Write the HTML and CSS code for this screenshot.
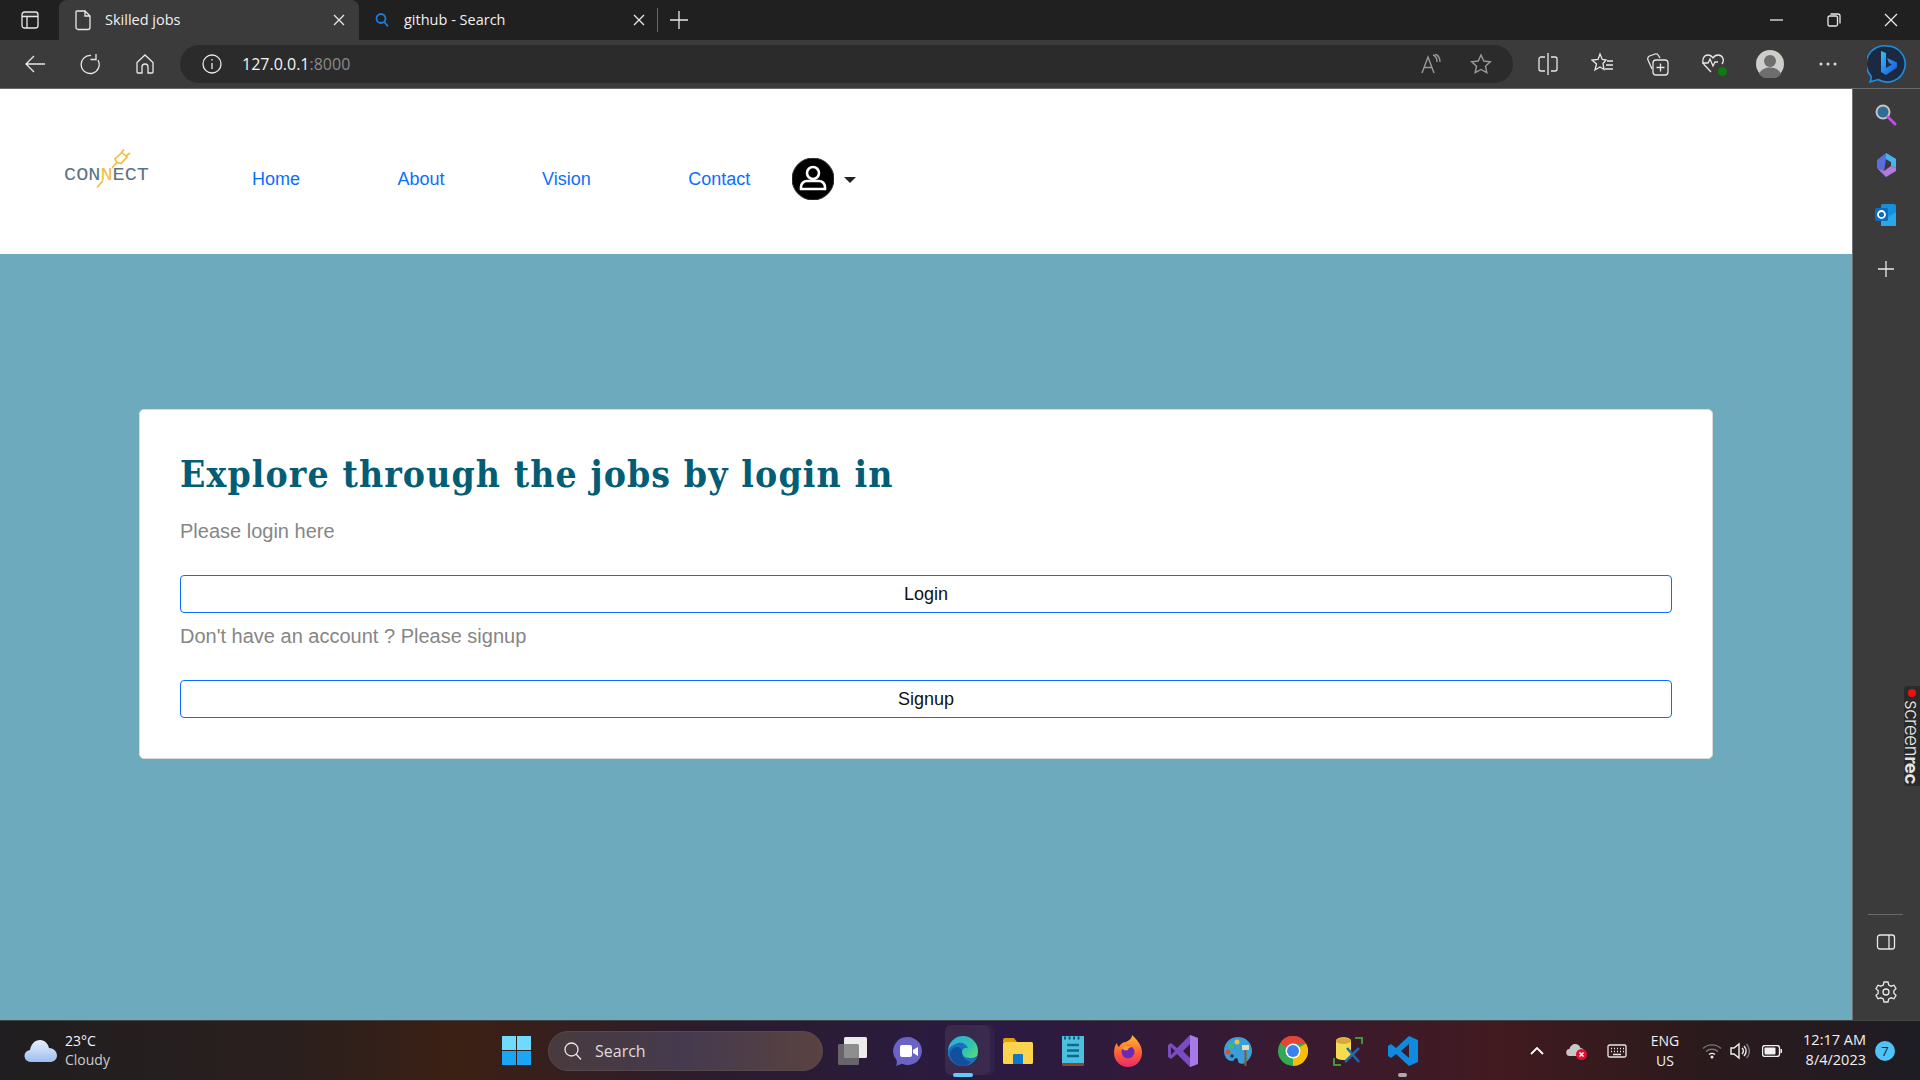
FILE: index.html
```html
<!doctype html>
<html lang="en">
<head>
	<meta charset="UTF-8">
	<title>Skilled jobs</title>
	<link rel="stylesheet" href="styles.css">
</head>
<body>
	<!-- tabs row -->
	<div class="titlebar">
		<div class="tab_actions">
			<svg width="20" height="20" viewBox="0 0 20 20" class="line"><rect x="2" y="2" width="16" height="16" rx="2.5"/><path d="M2 6.5h16M7 6.5V18" /><rect x="2" y="2" width="16" height="4.5" class="solid"/></svg>
		</div>
		<div class="tab tab_on">
			<svg width="18" height="22" viewBox="0 0 18 22" class="line"><path d="M3 2h8l5 5v11.5a2 2 0 0 1-2 2H4a2 2 0 0 1-2-2V3a1 1 0 0 1 1-1zM11 2v5h5"/></svg>
			<span class="tab_text">Skilled jobs</span>
			<svg class="tab_close line" width="12" height="12" viewBox="0 0 12 12"><path d="M1 1l10 10M11 1L1 11"/></svg>
		</div>
		<div class="tab tab_second">
			<svg width="18" height="18" viewBox="0 0 18 18" class="line_blue"><circle cx="8" cy="7.5" r="4.5"/><path d="M11.3 11l3.700 4.500"/></svg>
			<span class="tab_text">github - Search</span>
			<svg class="tab_close line" width="12" height="12" viewBox="0 0 12 12"><path d="M1 1l10 10M11 1L1 11"/></svg>
		</div>
		<div class="tab_sep"></div>
		<div class="tab_new">
			<svg width="18" height="18" viewBox="0 0 18 18" class="line"><path d="M9 0v18M0 9h18"/></svg>
		</div>
		<div class="win_ctrls">
			<div class="win_btn"><svg width="14" height="14" viewBox="0 0 14 14" class="line"><path d="M0 7h13"/></svg></div>
			<div class="win_btn"><svg width="14" height="14" viewBox="0 0 14 14" class="line"><rect x="1" y="3" width="9.5" height="10" rx="1.5"/><path d="M3.5 1h7.500a2 2 0 0 1 2 2v7.500"/></svg></div>
			<div class="win_btn"><svg width="14" height="14" viewBox="0 0 14 14" class="line"><path d="M1 1l12 12M13 1L1 13"/></svg></div>
		</div>
	</div>

	<!-- address row -->
	<div class="toolbar">
		<div class="tool_btn"><svg width="22" height="22" viewBox="0 0 22 22" class="line"><path d="M21 11H2M10 3l-8 8 8 8"/></svg></div>
		<div class="tool_btn"><svg width="22" height="22" viewBox="0 0 22 22" class="line"><path d="M19 7a9 9 0 1 1-7-4.500M17 1v5.500h-5.500"/></svg></div>
		<div class="tool_btn"><svg width="22" height="22" viewBox="0 0 22 22" class="line"><path d="M3 9.500L11 2l8 7.500V19a1 1 0 0 1-1 1h-4v-6a3 3 0 0 0-6 0v6H4a1 1 0 0 1-1-1z"/></svg></div>
		<div class="address">
			<svg width="20" height="20" viewBox="0 0 20 20" class="line"><circle cx="10" cy="10" r="9"/><path d="M10 9v6M10 5v1.500"/></svg>
			<span class="url">127.0.0.1<span class="url_port">:8000</span></span>
			<div class="address_right">
				<svg width="20" height="20" viewBox="0 0 20 20" class="line_dim"><path d="M1 19L7 3l6 16M3 13.500h8M12 1c3 1 4 4 4 7M14 0c4 1.500 5 5 5 8"/></svg>
				<svg width="22" height="22" viewBox="0 0 22 22" class="line_dim"><path d="M11 2l2.800 6 6.500.8-4.800 4.400 1.300 6.500L11 16.500l-5.800 3.200 1.300-6.500-4.800-4.400L8.200 8z"/></svg>
			</div>
		</div>
		<div class="tool_group">
			<div class="tool_btn"><svg width="22" height="24" viewBox="0 0 22 24" class="line"><path d="M11 1v22M8 5H4a2 2 0 0 0-2 2v10a2 2 0 0 0 2 2h4M14 5h4a2 2 0 0 1 2 2v10a2 2 0 0 1-2 2h-4"/></svg></div>
			<div class="tool_btn"><svg width="24" height="24" viewBox="0 0 24 24" class="line"><path d="M9 2l2.300 5.500 3.700.5-3 3.500 1 6-4-2.500-5 3 1.500-6L1 8l6-.5zM16 9h6M15 13h7M14 17h8"/></svg></div>
			<div class="tool_btn"><svg width="24" height="24" viewBox="0 0 24 24" class="line"><path d="M6 17L2 8a3 3 0 0 1 1.500-4L9 2a3 3 0 0 1 3.500 1.500L14 6"/><rect x="7" y="8" width="15" height="15" rx="3"/><path d="M14.500 11.500v8M10.500 15.500h8"/></svg></div>
			<div class="tool_btn tool_health">
				<svg width="24" height="24" viewBox="0 0 24 24" class="line"><path d="M10 20L3.500 13C0 9 2.500 3 7 3c2.500 0 4 1.500 5 3 1-1.500 2.500-3 5-3 4.500 0 7 5 4 9M1 11h6l2-4 3 7 2-4h3"/></svg>
				<span class="health_dot"></span>
			</div>
			<div class="tool_btn tool_avatar">
				<svg width="28" height="28" viewBox="0 0 28 28"><circle cx="14" cy="14" r="14" class="av_bg"/><circle cx="14" cy="11" r="6" class="av_fg"/><path d="M3 24c2-5 7-6.500 11-6.500S23 19 25 24a14 14 0 0 1-22 0z" class="av_fg"/></svg>
			</div>
			<div class="tool_btn tool_more"><svg width="18" height="4" viewBox="0 0 18 4" class="dots"><circle cx="2" cy="2" r="1.500"/><circle cx="9" cy="2" r="1.500"/><circle cx="16" cy="2" r="1.500"/></svg></div>
		</div>
		<div class="bing">
			<svg width="40" height="40" viewBox="0 0 40 40">
				<defs><linearGradient id="bingb" x1="0" y1="0" x2="1" y2="1"><stop offset="0" stop-color="#37bdff"/><stop offset="1" stop-color="#1a55d8"/></linearGradient></defs>
				<path d="M20 2a18 18 0 1 1-9 33.500L3 38c1-2 1.500-4 1-6A18 18 0 0 1 20 2z" class="bing_ring"/>
				<path d="M14 7l5 2v15l6-3.500-3-1.500-2-5 10 4.500v5L19 31l-5-3z" fill="url(#bingb)"/>
			</svg>
		</div>
	</div>

	<div class="viewport">
		<div class="page">
			<div class="site_nav">
				<svg class="logo" width="90" height="50" viewBox="0 0 90 50">
					<path d="M35 38.500l6-7M50 19l5-5.500" class="logo_plug"/>
					<path d="M55 13.500l-2-3.500 7-6.500 5 4.500-6 6.500zM59 4l3-3.500M64 7l4-3" class="logo_plug"/>
					<text x="2" y="30.500" class="logo_text" textLength="85" lengthAdjust="spacingAndGlyphs">CON<tspan class="logo_n">N</tspan>ECT</text>
				</svg>
				<a href="#" class="nav_link">Home</a>
				<a href="#" class="nav_link">About</a>
				<a href="#" class="nav_link">Vision</a>
				<a href="#" class="nav_link">Contact</a>
				<div class="user_menu">
					<svg width="42" height="42" viewBox="0 0 42 42">
						<circle cx="21" cy="21" r="21" class="user_bg"/>
						<circle cx="21" cy="15" r="6" class="user_line"/>
						<path d="M9 31v-2a6 6 0 0 1 6-6h12a6 6 0 0 1 6 6v2z" class="user_line"/>
					</svg>
					<span class="caret"></span>
				</div>
			</div>
			<div class="content">
				<div class="card">
					<h1 class="card_title">Explore through the jobs by login in</h1>
					<p class="card_text">Please login here</p>
					<button class="card_btn">Login</button>
					<p class="card_text">Don't have an account ? Please signup</p>
					<button class="card_btn">Signup</button>
				</div>
			</div>
		</div>

		<div class="sidebar">
			<div class="side_btn"><svg width="24" height="24" viewBox="1 1 24 24"><circle cx="10" cy="10" r="6.500" class="sb_glass"/><path d="M15 15l7 7" class="sb_handle"/></svg></div>
			<div class="side_btn">
				<svg width="24" height="26" viewBox="0 0 24 26">
					<path d="M12 1l10 6-5 3-5-3-2 12-7-3V8z" class="cop_left"/>
					<path d="M12 1l10 6v9l-5-2v-4l-5-3z" class="cop_top"/>
					<path d="M3 16l7 3 7-5 5 2v3l-10 6z" class="cop_bottom"/>
				</svg>
			</div>
			<div class="side_btn">
				<svg width="24" height="24" viewBox="0 0 24 24"><rect x="7" y="1" width="15" height="22" rx="2" class="ol_back"/><path d="M22 9l-9 6-6-4v12h15z" class="ol_front"/><rect x="1" y="5" width="13" height="13" rx="1.500" class="ol_tile"/><circle cx="7.500" cy="11.500" r="3.500" class="ol_o"/></svg>
			</div>
			<div class="side_btn side_plus"><svg width="16" height="16" viewBox="0 0 16 16" class="line"><path d="M8 0v16M0 8h16"/></svg></div>
			<div class="side_bottom">
				<div class="side_rule"></div>
				<div class="side_btn"><svg width="20" height="16" viewBox="0 0 20 16" class="line"><rect x="1.500" y="1" width="17" height="14" rx="2.500"/><path d="M13 1v14"/></svg></div>
				<div class="side_btn"><svg width="22" height="22" viewBox="0 0 22 22" class="line"><circle cx="11" cy="11" r="3"/><path d="M9 1h4l.7 3 2.500 1.200 2.800-1 2 3.400-2.200 2.100v2.600l2.200 2.100-2 3.400-2.800-1L13.700 18 13 21H9l-.7-3-2.500-1.200-2.800 1-2-3.400 2.200-2.100V9.700L1 7.600l2-3.400 2.800 1L8.300 4z"/></svg></div>
			</div>
			<div class="screenrec"><span class="rec_dot"></span><span class="rec_text">screen<b>rec</b></span></div>
		</div>
	</div>

	<!-- windows taskbar -->
	<div class="taskbar">
		<div class="weather">
			<svg width="34" height="24" viewBox="0 0 34 24">
				<defs><linearGradient id="cloud" x1="0" y1="0" x2="0" y2="1"><stop offset="0" stop-color="#e6f0ff"/><stop offset="1" stop-color="#9dbdf0"/></linearGradient></defs>
				<path d="M7 23a6 6 0 0 1-1-12c1-6 5-10 10-10s8 4 9 8c4 0 8 3 8 7.500S29 23 26 23z" fill="url(#cloud)"/>
			</svg>
			<div class="weather_text"><span class="weather_temp">23°C</span><span>Cloudy</span></div>
		</div>
		<div class="task">
			<svg width="29" height="29" viewBox="0 0 29 29"><rect width="14" height="14" class="win_a"/><rect x="15" width="14" height="14" class="win_a"/><rect y="15" width="14" height="14" class="win_b"/><rect x="15" y="15" width="14" height="14" class="win_b"/></svg>
		</div>
		<div class="task_search">
			<svg width="20" height="20" viewBox="0 0 20 20" class="line"><circle cx="8.500" cy="8.500" r="6.500"/><path d="M13 13l5 5.500"/></svg>
			<span>Search</span>
		</div>
		<div class="task">
			<svg width="30" height="28" viewBox="0 0 30 28"><rect x="6" y="0" width="23" height="21" rx="1.500" class="tv_front"/><rect x="0" y="7" width="21" height="21" rx="1.500" class="tv_back"/></svg>
		</div>
		<div class="task">
			<svg width="30" height="30" viewBox="0 0 30 30"><path d="M15 1a14 14 0 1 1-6 26.700L3 30c1-2 1-4 .5-6A14 14 0 0 1 15 1z" class="meet_bg"/><rect x="7" y="9" width="12" height="12" rx="2" class="meet_fg"/><path d="M20 14l5-3v9l-5-3z" class="meet_fg"/></svg>
		</div>
		<div class="task task_on">
			<svg width="32" height="32" viewBox="0 0 32 32">
				<defs><linearGradient id="edge" x1="0" y1="0" x2="1" y2="1"><stop offset="0" stop-color="#2fa8e8"/><stop offset=".55" stop-color="#2fc6a8"/><stop offset="1" stop-color="#7fe060"/></linearGradient></defs>
				<circle cx="16" cy="16" r="15" fill="url(#edge)"/>
				<path d="M31 18c0 3-3 5-8 5-6 0-8-3-8-6s3-5 6-4c-2-5-7-6-10-5C5 10 1 13 1 17c0 8 7 14 15 14 7 0 14-5 15-13z" class="edge_b"/>
				<path d="M15 17c0 4 3 9 9 10-3 3-5 4-8 4-8 0-13-7-13-12 0-4 4-7 7-7 3 0 5 2 5 5z" class="edge_c"/>
			</svg>
			<span class="task_bar"></span>
		</div>
		<div class="task">
			<svg width="30" height="26" viewBox="0 0 30 26"><path d="M0 2a2 2 0 0 1 2-2h9l3 4h-14z" class="dir_tab"/><rect y="4" width="30" height="22" rx="1.500" class="dir_body"/><path d="M10 17a1 1 0 0 1 1-1h8a1 1 0 0 1 1 1v9H10z" class="dir_slot"/></svg>
		</div>
		<div class="task">
			<svg width="22" height="30" viewBox="0 0 22 30"><rect width="22" height="30" rx="1" class="note_foot"/><rect width="22" height="27" class="note_body"/><path d="M2 2h2M6.500 2h2M11 2h2M15.500 2h2" class="note_rings"/><path d="M5 9h12M5 14.500h12M5 20h12" class="note_lines"/></svg>
		</div>
		<div class="task">
			<svg width="30" height="32" viewBox="0 0 30 32">
				<defs><linearGradient id="fox" x1="0" y1="0" x2="0" y2="1"><stop offset="0" stop-color="#ffbd2e"/><stop offset=".6" stop-color="#ff5a36"/><stop offset="1" stop-color="#e8286e"/></linearGradient></defs>
				<path d="M19 0c4 4 10 9 10 18a14 14 0 0 1-28 0c0-4 1-8 3-10 0 2 1 3 2 4 1-3 4-5 7-5 3-2 6-3 6-7z" fill="url(#fox)"/>
				<circle cx="15" cy="17" r="6.500" class="fox_eye"/>
				<path d="M9 13c3-3 8-3 11-1-3 0-5 1-5 3-3 1-5 0-6-2z" class="fox_head"/>
			</svg>
		</div>
		<div class="task">
			<svg width="30" height="32" viewBox="0 0 30 32"><path d="M22 0l8 3v26l-8 3-13-13-6 5-3-2V10l3-2 6 5zM3 12v8l4-4zM22 9l-7 7 7 7z" class="vs_logo" fill-rule="evenodd"/><path d="M22 0l8 3v26l-8 3z" class="vs_side"/></svg>
		</div>
		<div class="task">
			<svg width="30" height="30" viewBox="0 0 30 30"><path d="M15 1C7 1 1 7 1 15c0 5 3 10 8 10 3 0 2-3 4-3 1 0 2 1 2 3s3 4 7 2c4-3 7-7 7-12C29 7 23 1 15 1z" class="pal_body"/><circle cx="8" cy="10" r="2.500" class="pal_g"/><circle cx="14" cy="6" r="2.500" class="pal_y"/><circle cx="5" cy="16" r="2.500" class="pal_r"/><circle cx="9" cy="20" r="1.800" class="pal_d"/><rect x="19" y="9" width="7" height="5" class="pal_brush"/><rect x="21.500" y="14" width="2" height="16" class="pal_stick"/></svg>
		</div>
		<div class="task">
			<svg width="30" height="30" viewBox="0 0 30 30"><circle cx="15" cy="15" r="15" class="ch_green"/><path d="M15 15L2 7.500A15 15 0 0 1 28 7.500H15z" class="ch_red"/><path d="M15 15l0 0L28 7.500A15 15 0 0 1 15 30z" class="ch_yellow"/><circle cx="15" cy="15" r="7.500" class="ch_white"/><circle cx="15" cy="15" r="6" class="ch_blue"/></svg>
		</div>
		<div class="task">
			<svg width="30" height="30" viewBox="0 0 30 30"><path d="M3 5c0-5 15-5 15 0v16c0 4-15 4-15 0z" class="db_body"/><ellipse cx="10.500" cy="5" rx="7.500" ry="3" class="db_top"/><path d="M22 2h7v6M1 22v7h7" class="db_corner"/><path d="M12 26l14-14M14 12l12 14" class="db_tools"/></svg>
		</div>
		<div class="task">
			<svg width="30" height="30" viewBox="0 0 30 30"><path d="M21 0l9 4v22l-9 4L8 18l-5 4-3-2V10l3-2 5 4zM21 8l-8 7 8 7z" class="code_logo" fill-rule="evenodd"/></svg>
			<span class="task_bar task_bar_dim"></span>
		</div>

		<div class="tray">
			<div class="tray_ico"><svg width="14" height="8" viewBox="0 0 14 8" class="line_thick"><path d="M1 7l6-6 6 6"/></svg></div>
			<div class="tray_ico tray_cloud"><svg width="22" height="18" viewBox="0 0 22 18"><path d="M4 14a3.500 3.500 0 0 1-.5-7C4 4 7 2 9 2c3 0 5 2 5.500 4 2 0 4 2 4 4s-2 4-4 4z" class="cl_bg"/><circle cx="15.500" cy="12.500" r="5.500" class="cl_red"/><path d="M13.500 10.500l4 4M17.500 10.500l-4 4" class="cl_x"/></svg></div>
			<div class="tray_ico"><svg width="20" height="14" viewBox="0 0 20 14" class="line"><rect x="1" y="1" width="18" height="12" rx="1.500"/><path d="M4 4.500h1M7 4.500h1M10 4.500h1M13 4.500h1M16 4.500h1M4 7.500h1M7 7.500h1M10 7.500h1M13 7.500h1M16 7.500h1M6 10.500h8"/></svg></div>
			<div class="tray_lang"><span>ENG</span><span>US</span></div>
			<div class="tray_net"><svg width="20" height="16" viewBox="0 0 20 16"><path d="M1 5.500a13 13 0 0 1 18 0" class="net_dim"/><path d="M4 8.500a9 9 0 0 1 12 0" class="net_dim"/><path d="M7 11.500a5 5 0 0 1 6 0" class="net_on"/><circle cx="10" cy="14" r="1.500" class="net_dot"/></svg></div>
			<div class="tray_net"><svg width="20" height="18" viewBox="0 0 20 18"><path d="M1 6v6h3l5 4V2L4 6z" class="net_on"/><path d="M12 6a4 4 0 0 1 0 6M14 4a7 7 0 0 1 0 10" class="net_on"/><path d="M16.500 2a10 10 0 0 1 0 14" class="net_dim"/></svg></div>
			<div class="tray_batt"><svg width="20" height="12" viewBox="0 0 20 12"><rect x=".5" y=".5" width="17" height="11" rx="2.500" class="net_on"/><rect x="2.500" y="2.500" width="11" height="7" rx="1" class="net_dot"/><rect x="18.500" y="4" width="1.500" height="4" class="net_dot"/></svg></div>
			<div class="clock"><span>12:17 AM</span><span>8/4/2023</span></div>
			<div class="badge">7</div>
		</div>
	</div>
</body>
</html>
```

FILE: styles.css
```css
html,body{height: 100%;}
body{
	margin: 0;
	display: flex;
	flex-direction: column;
	height: 100vh;
	overflow: hidden;
	background-color: #3b3b3b;
	font-family: 'Liberation Sans', Arial, sans-serif;
}
svg{display: block;flex-shrink: 0;}
.line path,.line rect,.line circle{fill: none;stroke: #e8e8e8;stroke-width: 1.3;}
.line rect.solid{fill: #e8e8e8;fill-opacity: .1;stroke: none;}
.line_dim path{fill: none;stroke: #9a9a9a;stroke-width: 1.4;}
.line_blue circle,.line_blue path{fill: none;stroke: #1a7fd8;stroke-width: 1.8;}
.line_thick path{fill: none;stroke: #fff;stroke-width: 1.8;}
.dots circle{fill: #ddd;}

/* title bar */
.titlebar{
	display: flex;
	align-items: center;
	height: 40px;
	background-color: #202020;
	color: #f0f0f0;
	font: 14.5px 'Open Sans', sans-serif;
}
.tab_actions{
	display: flex;
	justify-content: center;
	width: 59px;
}
.tab{
	display: flex;
	align-items: center;
	gap: 13px;
	width: 300px;
	height: 40px;
	margin-right: 1px;
	padding: 0 14px 0 15px;
	box-sizing: border-box;
}
.tab_second{padding: 0 15px 0 13px;}
.tab_on{
	background-color: #3b3b3b;
	border-radius: 8px 8px 0 0;
}
.tab_text{flex: 1;padding-bottom: 2px;}
.tab_sep{width: 1px;height: 24px;background-color: #6a6a6a;margin-left: -4px;}
.tab_new{margin-left: 12px;}
.win_ctrls{display: flex;margin-left: auto;padding-right: 1px;}
.win_btn{
	display: flex;
	justify-content: center;
	width: 57px;
}

/* address row */
.toolbar{
	display: flex;
	align-items: center;
	height: 48px;
	padding-left: 7px;
	border-bottom: 1px solid #6a6a6a;
	background-color: #3b3b3b;
}
.tool_btn{
	position: relative;
	display: flex;
	align-items: center;
	justify-content: center;
	width: 55px;
	height: 48px;
}
.tool_avatar{margin-left: 2px;}
.tool_more{margin-left: 3px;}
.address{
	display: flex;
	align-items: center;
	gap: 20px;
	width: 1333px;
	height: 38px;
	margin-left: 8px;
	padding: 0 0 0 22px;
	box-sizing: border-box;
	border-radius: 19px;
	background-color: #2b2b2b;
	font: 16px 'Open Sans', sans-serif;
	color: #f4f4f4;
}
.url_port{color: #8a8a8a;}
.address_right{
	display: flex;
	align-items: center;
	gap: 29px;
	margin-left: auto;
	padding-right: 21px;
}
.tool_group{display: flex;margin-left: 7px;}
.health_dot{
	position: absolute;
	left: 33px;
	top: 27px;
	width: 9px;
	height: 9px;
	border-radius: 50%;
	background-color: #107c10;
}
.av_bg{fill: #cfcdca;}
.av_fg{fill: #6e6e6e;}
.bing{margin-left: 12px;}
.bing_ring{fill: #1b2a40;stroke: #1a8fe0;stroke-width: 1.6;}

/* page */
.viewport{
	display: flex;
	flex: 1;
	height: 0;
	min-height: 0;
}
.page{
	display: flex;
	flex-direction: column;
	flex: 1;
	background-color: #6eaabd;
}
.site_nav{
	display: flex;
	align-items: center;
	height: 165px;
	padding: 16px 0 0 62px;
	box-sizing: border-box;
	background-color: #fff;
}
.logo{margin: -11px 100px 0 0;}
.logo_plug{fill: none;stroke: #f4bc3c;stroke-width: 1.6;}
.logo_text{
	font: 19px 'Liberation Mono', monospace;
	fill: #5d7383;
}
.logo_n{fill: #f4bc3c;}
.nav_link{
	margin-right: 97.5px;
	color: #0d6efd;
	font-size: 18px;
	text-decoration: none;
}
.user_menu{
	display: flex;
	align-items: center;
	gap: 10px;
	margin: -2px 0 0 -56px;
}
.user_bg{fill: #000;stroke: #333;stroke-width: 1;}
.user_line{fill: none;stroke: #fff;stroke-width: 2.6;}
.caret{
	width: 0;
	height: 0;
	margin-top: 2px;
	border-top: 6px solid #222;
	border-left: 6px solid transparent;
	border-right: 6px solid transparent;
}
.content{
	flex: 1;
	padding: 155px 139px 0;
}
.card{
	padding: 40px;
	border: 1px solid #dcdcdc;
	border-radius: 5px;
	background-color: #fff;
}
.card_title{
	margin: 0 0 18px;
	color: #035d75;
	font: bold 37px/48px 'DejaVu Serif Condensed', 'DejaVu Serif', serif;
	letter-spacing: 1.1px;
}
.card_text{
	margin: 8px 0 29px;
	color: #868686;
	font-size: 20px;
	line-height: 30px;
}
.card_title + .card_text{margin-top: 0;}
.card_btn{
	display: block;
	width: 100%;
	height: 38px;
	padding: 0;
	border: 1px solid #0d6efd;
	border-radius: 4px;
	background-color: #fff;
	color: #111;
	font: 18px 'Liberation Sans', sans-serif;
}

/* edge sidebar */
.sidebar{
	position: relative;
	display: flex;
	flex-direction: column;
	width: 65px;
	padding: 1px 2px 0 0;
	border-left: 1px solid #6f7173;
	background-color: #3b3b3b;
}
.side_btn{
	display: flex;
	align-items: center;
	justify-content: center;
	height: 50px;
}
.side_plus{margin-top: 4px;}
.side_bottom{margin-top: auto;padding-bottom: 3px;}
.side_rule{width: 35px;height: 1px;margin: 0 auto 2px;background-color: #6a6a6a;}
.sb_glass{fill: #2d6c95;stroke: #c4c4c4;stroke-width: 2;}
.sb_handle{stroke: #c64ae0;stroke-width: 3;stroke-linecap: round;}
.cop_left{fill: #5a6ee0;}
.cop_top{fill: #44b4ea;}
.cop_bottom{fill: #b57ae2;}
.ol_back{fill: #1490df;}
.ol_front{fill: #28a8ea;}
.ol_tile{fill: #0f6cbd;}
.ol_o{fill: none;stroke: #fff;stroke-width: 1.8;}
.screenrec{
	position: absolute;
	right: 0;
	top: 597px;
	display: flex;
	flex-direction: column;
	align-items: center;
	gap: 3px;
	width: 16px;
	height: 100px;
	padding-top: 3px;
	box-sizing: border-box;
	border-radius: 4px 0 0 4px;
	background-color: #2a2a2a;
	color: #e4e4e4;
}
.rec_dot{width: 8px;height: 8px;border-radius: 50%;background-color: #f01010;flex-shrink: 0;}
.rec_text{
	writing-mode: vertical-rl;
	font: 300 18.5px/16px 'Inter', sans-serif;
	letter-spacing: -.4px;
}
.rec_text b{font-weight: 700;}

/* taskbar */
.taskbar{
	display: flex;
	align-items: center;
	height: 60px;
	flex-shrink: 0;
	border-top: 1px solid #444;
	box-sizing: border-box;
	background: linear-gradient(90deg,#201e20 0,#2a1f1e 15%,#3c2014 24%,#2a1c30 38%,#2b1a42 52%,#3a1a30 68%,#421a20 78%,#2c1a1c 88%,#1e1c24 100%);
	color: #eee;
	font: 14px 'Open Sans', sans-serif;
}
.weather{
	display: flex;
	align-items: center;
	gap: 7px;
	width: 489px;
	padding-left: 24px;
	box-sizing: border-box;
	font-size: 14px;
	line-height: 19px;
}
.weather_text{display: flex;flex-direction: column;color: #ccc;margin-top: -2px;}
.weather_temp{color: #f4f4f4;}
.task{
	position: relative;
	display: flex;
	align-items: center;
	justify-content: center;
	width: 55px;
	height: 59px;
	flex-shrink: 0;
}
.task_on::before{
	content: '';
	position: absolute;
	left: 10px;
	top: 4px;
	width: 45px;
	height: 50px;
	border-radius: 6px;
	background-color: rgba(255,255,255,.07);
	box-shadow: 5px 0 0 rgba(255,255,255,.03);
}
.task_on svg{position: relative;}
.task_bar{
	position: absolute;
	left: 18px;
	bottom: 3px;
	width: 20px;
	height: 4px;
	border-radius: 2px;
	background-color: #60cdff;
}
.task_bar_dim{left: 23px;width: 9px;background-color: #aaa;}
.task_search{
	display: flex;
	align-items: center;
	gap: 12px;
	width: 275px;
	height: 40px;
	margin: 0 2px 0 4px;
	padding-left: 14px;
	box-sizing: border-box;
	border-radius: 20px;
	border: 1px solid #57484c;
	background: linear-gradient(90deg,#4a3a3e,#453a4e 50%,#5a4240);
	color: #ddd;
	font-size: 16px;
}
.win_a{fill: #6fdcff;}
.win_b{fill: #1aa5f5;}
.tv_back{fill: #777;fill-opacity: .8;}
.tv_front{fill: #ececec;}
.meet_bg{fill: #6a62c4;}
.meet_fg{fill: #fff;}
.edge_b{fill: #1a6fc0;}
.edge_c{fill: #124f9c;}
.dir_tab{fill: #e0a000;}
.dir_body{fill: #fcd34d;}
.dir_slot{fill: #0f78c8;}
.note_foot{fill: #8a4a28;}
.note_body{fill: #4cc0de;}
.note_rings{stroke: #0e5a7a;stroke-width: 3;}
.note_lines{stroke: #0e6a8c;stroke-width: 2.500;}
.fox_eye{fill: #6a2ab8;}
.fox_head{fill: #ff9a2e;}
.vs_logo{fill: #7a4cc0;}
.vs_side{fill: #a87ae8;}
.pal_body{fill: #3a9fd8;}
.pal_g{fill: #3ac05a;}
.pal_y{fill: #f0c030;}
.pal_r{fill: #e05030;}
.pal_d{fill: #143a5c;}
.pal_brush{fill: #e8dcc0;}
.pal_stick{fill: #8a5a28;}
.ch_green{fill: #34a853;}
.ch_red{fill: #ea4335;}
.ch_yellow{fill: #fbbc05;}
.ch_white{fill: #fff;}
.ch_blue{fill: #3b7ff0;}
.db_body{fill: #f4dc50;}
.db_top{fill: #d8a840;}
.db_corner{fill: none;stroke: #3a9a3a;stroke-width: 2;}
.db_tools{stroke: #1a6ab8;stroke-width: 2.500;}
.code_logo{fill: #0f8ade;}
.tray{
	display: flex;
	align-items: center;
	margin-left: auto;
	padding-right: 25px;
	color: #f0f0f0;
	font-size: 14px;
	line-height: 20px;
}
.tray_ico{
	display: flex;
	justify-content: center;
	width: 40px;
}
.tray_lang{
	display: flex;
	flex-direction: column;
	align-items: center;
	width: 56px;
	margin-right: 5px;
}
.tray_net{display: flex;justify-content: center;width: 28px;}
.tray_batt{display: flex;justify-content: center;width: 36px;}
.clock{
	display: flex;
	flex-direction: column;
	align-items: flex-end;
	width: 76px;
	margin-top: -2px;
	font-size: 14.5px;
	white-space: nowrap;
}
.badge{
	width: 20px;
	height: 20px;
	margin-left: 9px;
	border-radius: 50%;
	background-color: #4fc3f7;
	color: #102030;
	font-size: 13px;
	line-height: 20px;
	text-align: center;
}
.cl_bg{fill: #c8c8c8;}
.cl_red{fill: #e01030;}
.cl_x{stroke: #fff;stroke-width: 1.500;}
.net_on{fill: none;stroke: #f0f0f0;stroke-width: 1.400;}
.net_dim{fill: none;stroke: #777;stroke-width: 1.400;}
.net_dot{fill: #f0f0f0;}
```
